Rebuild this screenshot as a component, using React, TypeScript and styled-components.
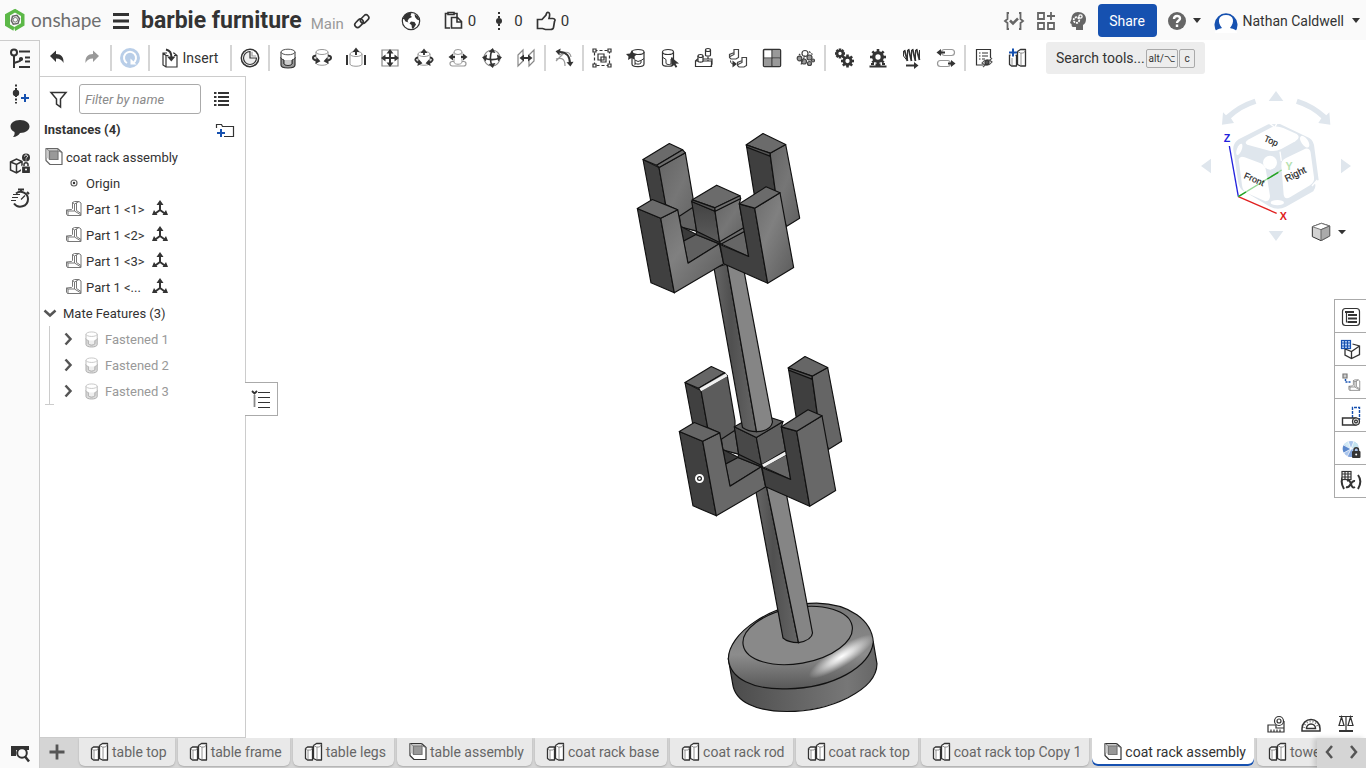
import React from "react";
import styled, { createGlobalStyle, css } from "styled-components";

const INK = "#333333";
const BLUE = "#1651b0";
const LINE = "#cccccc";

const GlobalStyle = createGlobalStyle`
  *, *::before, *::after { box-sizing: border-box; }
  body { margin: 0; background: #ffffff; }
  body, button, input { font-family: Roboto, "Liberation Sans", sans-serif; font-size: 14px; color: ${INK}; }
`;

/* ---------- layout ---------- */

const Page = styled.div`
  display: flex;
  flex-direction: column;
  height: 100vh;
  overflow: hidden;
`;

const Header = styled.header`
  display: flex;
  align-items: center;
  height: 40px;
  flex: none;
  padding: 1px 6px 0 4px;
  background: #fafafa;
`;

const Spacer = styled.div`
  flex: 1;
`;

const IconButton = styled.button<{ $w?: number; $h?: number }>`
  display: inline-flex;
  align-items: center;
  justify-content: center;
  flex: none;
  width: ${(p) => p.$w ?? 32}px;
  height: ${(p) => p.$h ?? 32}px;
  padding: 0;
  border: 0;
  background: transparent;
  cursor: pointer;
`;

const Brand = styled.a`
  display: flex;
  align-items: center;
  gap: 5px;
  width: 101px;
  color: #6e6e6e;
  text-decoration: none;
  font-family: Lato, sans-serif;
  font-size: 19px;
  line-height: 34px;
  height: 38px;
  padding-bottom: 2px;
`;

const DocTitle = styled.h1`
  margin: 0 0 0 4px;
  font-size: 23px;
  line-height: 28px;
  font-weight: 700;
  white-space: nowrap;
`;

const Branch = styled.span`
  margin: 6px 4px 0 9px;
  font-size: 15px;
  line-height: 20px;
  color: #999999;
`;

const Stat = styled.button`
  display: flex;
  align-items: center;
  gap: 3px;
  padding: 0;
  border: 0;
  background: transparent;
  font-size: 15px;
  line-height: 20px;
  white-space: nowrap;
`;

const Stats = styled.div`
  display: flex;
  align-items: center;
  gap: 11px;
  margin-left: 16px;
`;

const ShareButton = styled.button`
  width: 59px;
  height: 33px;
  margin: 0 8px 0 4px;
  padding: 0;
  border: 0;
  border-radius: 4px;
  background: ${BLUE};
  color: #ffffff;
`;

const UserButton = styled.button`
  display: flex;
  align-items: center;
  padding: 0;
  border: 0;
  background: transparent;
  white-space: nowrap;
`;

const UserName = styled.span`
  margin: 0 8px 0 4px;
`;

const Body = styled.div`
  display: flex;
  flex: 1;
  min-height: 0;
`;

const Rail = styled.nav`
  display: flex;
  flex-direction: column;
  align-items: center;
  flex: none;
  width: 40px;
  background: #fafafa;
  border-top: 1px solid ${LINE};
  border-right: 1px solid ${LINE};
`;

const Main = styled.div`
  display: flex;
  flex-direction: column;
  flex: 1;
  min-width: 0;
`;

const Toolbar = styled.div`
  display: flex;
  align-items: center;
  flex: none;
  height: 36px;
  padding-left: 1px;
`;

const Divider = styled.span`
  flex: none;
  width: 2px;
  height: 26px;
  margin: 0 1px;
  background: #d5d5d5;
`;

const InsertButton = styled.button`
  display: flex;
  align-items: center;
  justify-content: center;
  gap: 1px;
  flex: none;
  width: 78px;
  padding: 0 4px 0 0;
  border: 0;
  background: transparent;
`;

const SearchTools = styled.button`
  display: flex;
  align-items: center;
  flex: none;
  gap: 1px;
  height: 32px;
  width: 159px;
  margin-left: 11px;
  padding: 0 10px;
  border: 0;
  border-radius: 3px;
  background: #ededed;
  white-space: nowrap;
`;

const SearchLabel = styled.span`
  flex: 1;
  text-align: left;
`;

const Key = styled.kbd`
  height: 19px;
  min-width: 16px;
  padding: 0 2px;
  border: 1px solid #aaaaaa;
  border-radius: 2px;
  font-family: Roboto, "DejaVu Sans", sans-serif;
  font-size: 10px;
  line-height: 17px;
`;

const Work = styled.div`
  display: flex;
  flex: 1;
  min-height: 0;
`;

const Panel = styled.aside`
  flex: none;
  width: 206px;
  border: 1px solid ${LINE};
  border-left: 0;
  font-size: 13px;
`;

const FilterRow = styled.div`
  display: flex;
  align-items: center;
  gap: 8px;
  padding: 7px 10px 2px 7px;
`;

const FilterInput = styled.input`
  flex: 1;
  min-width: 0;
  height: 30px;
  padding: 0 5px;
  border: 1px solid #aaaaaa;
  border-radius: 3px;
  background: #ffffff;
  font-size: 13px;
  &::placeholder {
    color: #8a8a8a;
    font-style: italic;
  }
`;

const SectionRow = styled.div`
  display: flex;
  align-items: center;
  justify-content: space-between;
  height: 28px;
  padding: 0 8px 0 4px;
`;

const SectionTitle = styled.h2`
  margin: 0;
  font-size: 13px;
  line-height: 20px;
  font-weight: 700;
`;

const Tree = styled.ul`
  list-style: none;
  margin: 0;
  padding: 0;
`;

const TreeRow = styled.li<{ $indent: number; $gap?: number; $muted?: boolean }>`
  display: flex;
  align-items: center;
  gap: ${(p) => p.$gap ?? 0}px;
  height: 26px;
  padding-left: ${(p) => p.$indent}px;
  white-space: nowrap;
  color: ${(p) => (p.$muted ? "#999999" : INK)};
`;

const PartName = styled.span`
  width: 62px;
`;

const FeatureGroup = styled.ul`
  list-style: none;
  margin: 0 0 0 9px;
  padding: 0;
  border-left: 1px solid ${LINE};
  &::after {
    content: "";
    display: block;
    width: 9px;
    margin-left: -5px;
    border-bottom: 1px solid ${LINE};
  }
`;

const Canvas = styled.main`
  position: relative;
  display: flex;
  flex: 1;
  min-width: 0;
`;

const Model = styled.svg`
  flex: 1;
  min-width: 0;
`;

const PanelToggle = styled(IconButton)`
  position: absolute;
  left: -1px;
  top: 306px;
  background: #ffffff;
  border: 1px solid #aaaaaa;
  border-left: 0;
`;

const ViewCube = styled.div`
  position: absolute;
  top: 4px;
  right: 0;
`;

const SideTools = styled.div`
  position: absolute;
  right: 0;
  top: 223px;
  width: 32px;
  border: 1px solid #aaaaaa;
  border-right: 0;
  border-bottom: 0;
  background: #ffffff;
`;

const SideTool = styled(IconButton)`
  border-bottom: 1px solid #aaaaaa;
`;

const MeasureBar = styled.div`
  position: absolute;
  right: 3px;
  bottom: 0;
  display: flex;
`;

const TabBar = styled.div`
  display: flex;
  flex: none;
  height: 30px;
  background: #d5d5d5;
`;

const TabList = styled.div`
  display: flex;
  flex: 1;
  min-width: 0;
  gap: 3px;
  overflow: hidden;
  padding-left: 5px;
`;

const Tab = styled.button<{ $active?: boolean }>`
  display: flex;
  align-items: center;
  flex: none;
  height: 28px;
  padding: 0 8px 0 9px;
  border: 0;
  border-radius: 0 0 6px 6px;
  background: #e9e9e9;
  color: #666666;
  box-shadow: 0 1px 2px rgba(0, 0, 0, 0.2);
  white-space: nowrap;
  ${(p) =>
    p.$active &&
    css`
      background: #ffffff;
      color: ${INK};
      box-shadow: inset 0 -2px 0 ${BLUE};
    `}
`;

const TabScroll = styled.div`
  display: flex;
  flex: none;
  background: #d5d5d5;
  box-shadow: -3px 0 5px rgba(0, 0, 0, 0.15);
`;

/* ---------- icons ---------- */

type IconProps = { children: React.ReactNode; size?: number; stroke?: string };

const Icon = ({ children, size = 24, stroke = INK }: IconProps) => (
  <svg width={size} height={size} viewBox={`0 0 ${size} ${size}`} fill="none" stroke={stroke} strokeWidth="1.2" aria-hidden="true">
    {children}
  </svg>
);

const Caret = () => (
  <svg width="8" height="5" viewBox="0 0 8 5" aria-hidden="true">
    <path d="M0 0h8L4 5z" fill={INK} />
  </svg>
);

const LogoMark = () => (
  <svg width="22" height="24" viewBox="-1 0 22 24" aria-hidden="true">
    <path d="M9.500 1l3.500 1.800-8 4.700v9l4.400 2.500-1 3.800L0 17.800V6.300z" fill="#5cb848" />
    <path d="M10 .800l9.500 5.500v11.300l-9.300 5.400-1.200-3.700 7-4V8l-6.500-3.800z" fill="#5cb848" />
    <path d="M7.500 8.300l4.500-1 2.500 3.400-1.500 4.700-4.700.8-1.900-3.400z" fill="none" stroke="#666" strokeWidth="1.500" />
    <circle cx="10.300" cy="11.800" r="2.300" fill="none" stroke="#777" />
  </svg>
);

const MateGlyph = ({ muted }: { muted?: boolean }) => {
  const c = muted ? "#aaa" : INK;
  return (
    <g stroke={c}>
      <path d="M5 11v8c0 4 14 4 14 0v-8" fill={muted ? "#ddd" : "#999"} />
      <path d="M5 6v6c1 2 2 1 3 2v4c2 2 6 2 8 0v-4c1-1 2 0 3-2V6" fill="#fff" strokeWidth="1" />
      <path d="M8 14v4c2 2 6 2 8 0v-4" fill={muted ? "#eee" : "#ccc"} strokeWidth="1" />
      <ellipse cx="12" cy="6" rx="7" ry="2.800" fill="#fff" strokeWidth="1" stroke={muted ? "#bbb" : "#555"} />
    </g>
  );
};

const Cyl = ({ x = 6, w = 12, y = 6, h = 12 }) => (
  <g stroke="#999" strokeWidth="1">
    <path d={`M${x} ${y}v${h}c0 3 ${w} 3 ${w} 0v${-h}`} fill="#fff" />
    <ellipse cx={x + w / 2} cy={y} rx={w / 2} ry="2.500" fill="#fff" />
  </g>
);

const Arrow = ({ x, y, r }: { x: number; y: number; r: number }) => (
  <path d="M0 -3.500l4.500 3.500l-4.500 3.500z" transform={`translate(${x} ${y}) rotate(${r})`} fill={INK} stroke="none" />
);

const PartsGlyph = () => (
  <g stroke={INK} strokeWidth="1.300" strokeLinejoin="round">
    <path d="M3.500 8.500l2-1.500h5v13h-5l-2-1.500z" fill="#fff" />
    <path d="M3.500 8.500l2 1.500H9l1.500-2M6 10v10" strokeWidth=".8" stroke="#777" />
    <path d="M11.500 5.500l3-2h5V20h-5l-3-1.500z" fill="#fff" />
    <path d="M11.500 5.500l3 1.500h3l2-2.500M15 7v13" strokeWidth=".8" stroke="#777" />
  </g>
);

const AssemblyGlyph = ({ light }: { light?: boolean }) => (
  <g stroke={light ? "#666" : INK} strokeLinejoin="round" transform="translate(0 -.500)">
    <path d="M4 4h11.500l4.500 4v12H8l-4-4z" fill="#fff" />
    <path d="M4.500 4.500h11L16 6v9H7l-2.500-2z" fill="#ccc" stroke="none" />
    <path d="M7.500 6.500h8.500v8.500H7.500z" fill="#999" stroke="#777" />
    <path d="M4 4l3.500 2.500M16 6.500L15.500 4M16 6.500l4 1.500" stroke="#777" strokeWidth=".8" />
  </g>
);

const PartGlyph = () => (
  <g stroke="#777" strokeWidth="1" strokeLinejoin="round">
    <path d="M10.500 5.500L12.500 4.500h4.500l2 1.500v12.500H5.500L4.500 17v-4l5-.500 1-1z" fill="#fff" />
    <path d="M10.500 5.500l2 1.500v7H6l-1.500-1M12.500 7l4.500-2.500M12.500 14l6.500 4M14.500 6v7.500l4.500 3M6 14v4.500" />
  </g>
);

const AxesGlyph = () => (
  <g stroke={INK} strokeWidth="2">
    <path d="M12 6v7l-5.500 4M12 13l5.500 4" />
    <path d="M12 3l3.500 5h-7zM4 18l2-5 3.500 5zM20 18l-2-5-3.500 5z" fill={INK} stroke="none" />
  </g>
);

const gearTeeth = (cx: number, cy: number, r: number) =>
  [0, 45, 90, 135].map((a) => (
    <rect key={a} x={cx - 1.3} y={cy - r} width="2.600" height={2 * r} transform={`rotate(${a} ${cx} ${cy})`} fill={INK} stroke="none" />
  ));

const Gear = ({ cx, cy, r }: { cx: number; cy: number; r: number }) => (
  <g>
    {gearTeeth(cx, cy, r)}
    <circle cx={cx} cy={cy} r={r * 0.54} fill="#fff" stroke={INK} strokeWidth={r * 0.42} />
  </g>
);

type Tool = { label: string; art: React.ReactNode };

const historyTools: Tool[] = [
  { label: "Undo", art: <path d="M4 10l6-5.500v3.500c5 0 8 3 7.500 9-1.500-3-3.500-4.500-7.500-4.500v3.500z" fill={INK} stroke="none" /> },
  { label: "Redo", art: <path d="M19 10l-6-5.500v3.500c-5 0-8 3-7.500 9 1.500-3 3.500-4.500 7.500-4.500v3.500z" fill="#999" stroke="none" /> },
];

const mateTools: Tool[] = [
  { label: "Fastened mate", art: <MateGlyph /> },
  {
    label: "Revolute mate",
    art: (
      <>
        <Cyl x={6} w={12} y={6} h={11} />
        <path d="M6 9.500c-4 .500-4 4 0 5M18 9.500c4 .500 4 4 0 5" strokeWidth="2" />
        <Arrow x={6} y={14.5} r={10} />
        <Arrow x={18} y={14.5} r={170} />
      </>
    ),
  },
  {
    label: "Slider mate",
    art: (
      <>
        <Cyl x={6} w={12} y={8} h={10} />
        <path d="M3 9v10M21 9v10M12 4v5" strokeWidth="2" />
        <Arrow x={12} y={6} r={-90} />
      </>
    ),
  },
  {
    label: "Planar mate",
    art: (
      <>
        <path d="M4 4h16v16H4z" stroke="#888" />
        <path d="M12 5v14M5 12h14" strokeWidth="2" />
        <Arrow x={12} y={7.5} r={-90} />
        <Arrow x={12} y={16.5} r={90} />
        <Arrow x={7.5} y={12} r={180} />
        <Arrow x={16.5} y={12} r={0} />
      </>
    ),
  },
  {
    label: "Cylindrical mate",
    art: (
      <>
        <Cyl x={6} w={12} y={8} h={9} />
        <path d="M6 11.500c-5 1-2 5 1 5M18 11.500c5 1 2 5-1 5M12 4v5" strokeWidth="1.800" />
        <Arrow x={6} y={16.5} r={10} />
        <Arrow x={18} y={16.5} r={170} />
        <Arrow x={12} y={7} r={-90} />
      </>
    ),
  },
  {
    label: "Pin slot mate",
    art: (
      <>
        <rect x="4" y="15.500" width="16" height="4.500" rx="2.200" stroke="#999" />
        <Cyl x={8} w={8} y={6} h={10} />
        <path d="M5 11h4M15 11h4" strokeWidth="2" />
        <Arrow x={7} y={11} r={180} />
        <Arrow x={17} y={11} r={0} />
      </>
    ),
  },
  {
    label: "Ball mate",
    art: (
      <>
        <circle cx="12" cy="12" r="8" stroke="#888" />
        <path d="M12 4c-2 5-2 11 0 16M4 12c5 2 11 2 16 0" strokeWidth="1.600" />
        <Arrow x={12} y={6.5} r={-80} />
        <Arrow x={12} y={17.5} r={80} />
        <Arrow x={6.5} y={12} r={190} />
        <Arrow x={17.5} y={12} r={-10} />
      </>
    ),
  },
  {
    label: "Parallel mate",
    art: (
      <>
        <path d="M4 9l5-5v11l-5 5zM15 9l5-5v11l-5 5z" stroke="#888" />
        <path d="M9 12h6" strokeWidth="2" />
        <Arrow x={10} y={12} r={180} />
        <Arrow x={14} y={12} r={0} />
      </>
    ),
  },
];

const groupTools: Tool[] = [
  {
    label: "Group",
    art: (
      <>
        <rect x="4.500" y="4.500" width="15" height="15" strokeDasharray="3 2" />
        <path d="M3 3h3v3H3zM18 3h3v3h-3zM3 18h3v3H3zM18 18h3v3h-3z" fill="#fff" />
        <path d="M8 8h6v6H8zM11 11h5v5h-5z" fill="#fff" />
      </>
    ),
  },
  {
    label: "Mate connector",
    art: (
      <>
        <path d="M8 6v12c0 3.500 12 3.500 12 0V6" fill="#fff" />
        <ellipse cx="14" cy="6" rx="6" ry="2.500" fill="#fff" />
        <path d="M11 19v-5l3 1.500 3-1 3-2M11 17c2 1.500 4 1.500 6 0v-2.500" strokeWidth="1" />
        <path d="M8 4l1.500 3.500L13 8l-2.500 2.500L11 14l-3.500-2L4 14l.500-3.500L2 8l4-.500z" fill={INK} stroke="none" />
      </>
    ),
  },
  {
    label: "Replicate",
    art: (
      <>
        <path d="M4.500 6v12c0 3 11 3 11 0V6" fill="#fff" />
        <ellipse cx="10" cy="6" rx="5.500" ry="2.500" fill="#fff" />
        <path d="M5 11.500l3 2v4c1 1 3 1.500 5 .500v-5l2.500-1.500" strokeWidth="1" />
        <path d="M13 11l8 6.500-3.500.300 1.800 3-1.600 1-1.800-3-2.400 2z" fill={INK} stroke="none" />
      </>
    ),
  },
  {
    label: "Pattern",
    art: (
      <>
        <path d="M3.500 15h16v5.500h-16zM3.500 15l2-2h14.500v5l-1 2" />
        <path d="M6 10v5c0 1.500 5 1.500 5 0v-5M13.500 4v5c0 1.500 5 1.500 5 0V4" fill="#fff" />
        <ellipse cx="8.500" cy="10" rx="2.500" ry="1.500" fill="#fff" />
        <ellipse cx="16" cy="4" rx="2.500" ry="1.500" fill="#fff" />
        <path d="M16 11v4" strokeDasharray="2 1" />
      </>
    ),
  },
  {
    label: "Mirror parts",
    art: (
      <>
        <path d="M8 3.500h4.500v8L10 13H5l-1.500-1.500v-3L7 7h1zM8 3.500v5L4 10.500M16 11.500h4.500v8L18 21h-5l-1.500-1.500v-3L15 15h1zM16 11.500v5L12 18.500" fill="#fff" stroke="#444" />
        <path d="M4.500 14.500c0 3 1.500 3.500 4 3.500" strokeWidth="1" />
        <Arrow x={6.5} y={18} r={0} />
      </>
    ),
  },
  {
    label: "Display states",
    art: (
      <>
        <rect x="3.500" y="3.500" width="17" height="17" rx="1" fill="#fff" strokeWidth="1.500" />
        <path d="M12.500 4h7.500v8h-7.500zM4 12.500h8V20H4zM12.500 12.500H20V20h-7.500z" fill="#999" stroke="none" />
        <path d="M12 4v16M4 12h16" />
      </>
    ),
  },
  {
    label: "Named positions",
    art: (
      <g stroke="#444" fill="#999">
        <circle cx="11" cy="7.500" r="3" fill="#fff" />
        <circle cx="5.500" cy="12.500" r="2.300" />
        <circle cx="10" cy="15.500" r="2.500" />
        <circle cx="15.500" cy="11.500" r="2.500" />
        <circle cx="15.500" cy="17.500" r="2" />
        <circle cx="19" cy="14.500" r="1.500" />
        <path d="M5 8l2 2M15 5.500l3.500 3M7 18.500l4-9" strokeDasharray="2 1" />
      </g>
    ),
  },
];

const relationTools: Tool[] = [
  { label: "Gear relation", art: (<><Gear cx={8} cy={7.5} r={5} /><Gear cx={15.5} cy={15} r={6.5} /></>) },
  { label: "Rack and pinion", art: (<><Gear cx={12} cy={11} r={8} /><path d="M3.500 20.500h17M5 18h3M9.500 18.500h5M16 18h3" strokeWidth="2" /></>) },
  {
    label: "Screw relation",
    art: (
      <>
        <path d="M4.500 4l3 11M8.500 3l3 12M12.500 3l3 12M16.500 3l3 11" strokeWidth="1.800" />
        <path d="M3.500 5v5l4 5V4M11.500 15V4M15.500 15V4M19.500 14V4" strokeWidth="1" />
        <path d="M6 19.500h10" strokeWidth="2" />
        <Arrow x={14} y={19.5} r={0} />
      </>
    ),
  },
  {
    label: "Linear relation",
    art: (
      <>
        <rect x="7.500" y="3.500" width="13" height="6" rx="3" stroke="#999" />
        <rect x="3.500" y="14.500" width="13" height="6" rx="3" stroke="#999" />
        <path d="M5 6.500h6M14 17.500h5" strokeWidth="2" />
        <Arrow x={7} y={6.5} r={180} />
        <Arrow x={17} y={17.5} r={0} />
      </>
    ),
  },
];

const listTools: Tool[] = [
  {
    label: "Bill of materials",
    art: (
      <>
        <path d="M11 19H4.500V3.500h14V12" />
        <path d="M7 7h1.500M10 7h6M7 10h1.500M10 10h6M7 13h1.500M10 13h3" />
        <path d="M10 17c3-4 7-4 10-1-3 4-7 4-10 1zM20 12l-9 9" stroke="#555" />
        <circle cx="15" cy="16.500" r="2" fill="#555" />
      </>
    ),
  },
  {
    label: "Create part studio",
    art: (
      <>
        <PartsGlyph />
        <path d="M7 1v11M2 6.500h9" stroke="#fff" strokeWidth="4" />
        <path d="M7 2.500v8M3 6.500h8" stroke={BLUE} strokeWidth="2" />
      </>
    ),
  },
];

const railTools: Tool[] = [
  {
    label: "Assembly tree",
    art: (
      <>
        <circle cx="6" cy="5.500" r="3" strokeWidth="2" />
        <circle cx="13" cy="12" r="1.500" fill={INK} />
        <path d="M6 8v13M6 17c0-3 7-1 7-5M11 4.500h11M17 10.500h5M17 14.500h5M11 20h11" strokeWidth="2" />
      </>
    ),
  },
  {
    label: "Create version",
    art: (
      <>
        <path d="M8 2.500v19" strokeDasharray="2 1.500" strokeWidth="2" />
        <circle cx="8" cy="11" r="2.600" fill={INK} />
        <path d="M17 12v8M13 16h8" stroke={BLUE} strokeWidth="2" />
      </>
    ),
  },
  { label: "Comments", art: <path d="M12 3c6 0 9.500 3 9.500 6.500S18 16 12 16c-1 2-4 4-7 4 1-1 2-3 1.500-5C4 14 2.500 12 2.500 9.500 2.500 6 6 3 12 3z" fill={INK} stroke="none" /> },
  {
    label: "Part properties",
    art: (
      <>
        <path d="M2.500 10l6-3 5.500 2.500v8l-5.500 3.500-6-3zM2.500 10l6 2.500L14 9.500M8.500 12.500V21" strokeWidth="1.500" />
        <circle cx="18" cy="5.500" r="4" fill={INK} stroke="none" />
        <path d="M16.500 4.500c0-2 3-2 3 0 0 1-1.500 1-1.500 2M18 7.500v1" stroke="#fff" strokeWidth="1" />
        <rect x="13.500" y="14" width="9" height="7.500" rx="1" fill={INK} stroke="#fafafa" />
        <path d="M16 14v-1.500c0-2.500 4-2.500 4 0V14" strokeWidth="1.500" />
        <circle cx="18" cy="17.500" r="1" fill="#fff" stroke="none" />
      </>
    ),
  },
  {
    label: "History",
    art: (
      <>
        <path d="M8 6.500c5-4 12 0 12 5.500 0 8-10 10-14 4.500M10 2.500h6M13 2.500v3M19 5l2 2" strokeWidth="2" />
        <path d="M5 7.500h7M4 10.500h6M3 13.500h5M13 12.500l4-4" />
      </>
    ),
  },
];

const sideTools: Tool[] = [
  {
    label: "Outline",
    art: (
      <>
        <rect x="3.500" y="4.500" width="17" height="17" rx="3" />
        <path d="M6 8h9M9 11h9M9 14.500h9M9 18h9" strokeWidth="2" />
        <path d="M7.500 8v10h2" />
      </>
    ),
  },
  {
    label: "Configurations",
    art: (
      <>
        <path d="M13.500 7l7 2v8.500l-8 4-6.500-3.500V12l6.500 2.500 8-5.500M12.500 14.500v7" strokeWidth="1.300" />
        <rect x="2.500" y="3.500" width="9" height="8" fill="#c6dcfa" stroke={BLUE} />
        <path d="M2.500 6h9M2.500 9h9M5.500 3.500v8M8.500 3.500v8" stroke={BLUE} />
      </>
    ),
  },
  {
    label: "In context",
    art: (
      <>
        <path d="M4 4h4v4H4z" fill="#ccc" stroke="#777" />
        <path d="M6.500 9v3h6" stroke={BLUE} strokeDasharray="2 1" strokeWidth="1.500" />
        <g transform="translate(6.500 6.500) scale(.75)">
          <PartGlyph />
        </g>
      </>
    ),
  },
  {
    label: "Named positions",
    art: (
      <>
        <path d="M13.500 15V4.500h7V17" stroke={BLUE} strokeDasharray="3 1" strokeWidth="1.400" />
        <path d="M3.500 15H17v7H3.500z" strokeWidth="1.400" />
        <circle cx="17" cy="18.500" r="3.500" fill="#ddd" />
        <circle cx="17" cy="18.500" r="1.400" fill="#fff" />
      </>
    ),
  },
  {
    label: "Appearances",
    art: (
      <g stroke="none" transform="translate(0 1)">
        <circle cx="12" cy="12" r="8" fill="#a9c5ed" />
        <path d="M12 12L5 7.500A8 8 0 0 0 5 16z" fill="#5b88cc" />
        <path d="M12 12L9 4.500A8 8 0 0 0 5 7.500z" fill="#d3ebf5" />
        <path d="M12 12l-4 7a8 8 0 0 0 7 .500z" fill="#7c9fd8" />
        <path d="M12 12l3-7.500a8 8 0 0 1 4.500 5z" fill="#c4e4ef" />
        <path d="M12 12L9 4M12 12L4.500 8M12 12l-7.500 4M12 12l-4 8M12 12l3-8M12 12l8-2" stroke="#fff" strokeWidth=".8" />
        <rect x="13" y="14" width="8.500" height="7" rx="1" fill={INK} />
        <path d="M15 14.500V13c0-3 4.500-3 4.500 0v1.500" fill="none" stroke={INK} strokeWidth="1.500" />
        <circle cx="17.200" cy="17.500" r="1" fill="#fff" />
      </g>
    ),
  },
  {
    label: "Variables",
    art: (
      <>
        <path d="M5 6c-3 4-3 9 0 14M19 6c3 4 3 9 0 14M8 12c5-3 3 9 8 6M16 12c-5-1-4 8-9 6" strokeWidth="2" />
        <rect x="3" y="2.500" width="9" height="8" fill="#fff" />
        <path d="M3 5h9M3 8h9M6 2.500v8M9 2.500v8" />
      </>
    ),
  },
];

const ToolButtons = ({ tools }: { tools: Tool[] }) => (
  <>
    {tools.map((t) => (
      <IconButton key={t.label} $w={34} aria-label={t.label}>
        <Icon>{t.art}</Icon>
      </IconButton>
    ))}
  </>
);

/* ---------- model drawing ---------- */

const Rack = ({ lower }: { lower?: boolean }) => {
  const front = lower ? "#686868" : "url(#steel)";
  const top = lower ? "#666666" : "#6b6b6b";
  const bevel = "#6e6e6e";
  return (
    <g transform={lower ? "translate(662 343.500) scale(.33333)" : "translate(620 120.500) scale(.33333)"} stroke="#111" strokeWidth="3.500" strokeLinejoin="round">
      <path d="M69 117L117 141L137 252L92 240z" fill="#404040" />
      <path d="M117 141L196 97L219 232V262L230 332L183 318L172 268L137 252z" fill={lower ? "#5c5c5c" : "url(#steelSoft)"} />
      <path d="M178 287L219 260L230 332L183 320z" fill="#626262" />
      <path d="M69 117L148 69L188 88L110 134z" fill={top} />
      <path d="M110 134L188 88L196 97L117 141z" fill={bevel} />
      {lower && <path d="M115 139L194 94" stroke="#f0f0f0" strokeWidth="10" />}
      <path d="M379 73L450 100L466 212L403 224z" fill="#3f3f3f" />
      <path d="M450 98L497 72L539 293L499 318L466 212z" fill={lower ? "#656565" : "url(#steelSoft)"} />
      <path d="M379 73L429 39L497 72L450 98z" fill={top} />
      <path d="M379 73L450 98L450 107L380 80z" fill="#555555" />
      <path d="M183 318L230 342L190 362z" fill="#3a3a3a" />
      <path d="M190 362L228 342L298 370L204 428z" fill="#606060" />
      <path d="M230 332L299 364L300 371L228 342z" fill="#444444" />
      <path d="M302 370L374 332L386 408z" fill="#666666" />
      {lower ? (
        <>
          <path d="M217 250L283 282L299 366L230 332z" fill="#484848" />
          <path d="M283 282L363 234L358 250L371 322L299 366z" fill="#606060" />
          <path d="M217 250L288 210L363 234L283 282z" fill="#606060" />
        </>
      ) : (
        <>
          <path d="M215 243L285 272L299 366L230 332z" fill="url(#dark)" />
          <path d="M285 272L362 234L358 250L371 322L299 366z" fill="url(#steelSoft)" />
          <path d="M217 238L290 194L360 226L285 262z" fill={top} />
          <path d="M217 238L285 262V272L215 243z" fill="#555555" />
          <path d="M285 262L360 226L362 234L285 272z" fill="#707070" />
        </>
      )}
      <path d="M299 364L371 322L374 332L302 371z" fill={bevel} />
      {lower && <path d="M303 367L373 328" stroke="#f0f0f0" strokeWidth="10" />}
      <path d="M52 264L122 293L163 517L93 487z" fill="#404040" />
      <path d="M122 293L173 268L204 428L298 370L311 430L163 517z" fill={front} />
      <path d="M52 264L97 237L173 268L122 293z" fill={top} />
      <path d="M358 250L404 263L443 488L311 430L300 372L386 408z" fill="#404040" />
      <path d="M404 263L480 217L521 441L443 488z" fill={front} />
      <path d="M358 250L438 199L480 217L404 263z" fill={top} />
    </g>
  );
};

const CoatRack = () => (
  <Model viewBox="246 76 1120 662" role="img" aria-label="Coat rack assembly model">
    <defs>
      <linearGradient id="steel" x1="0" y1="0" x2="1" y2="1">
        <stop offset="0" stopColor="#6c6c6c" />
        <stop offset=".4" stopColor="#808080" />
        <stop offset="1" stopColor="#5a5a5a" />
      </linearGradient>
      <linearGradient id="steelSoft" x1="0" y1="0" x2="1" y2="1">
        <stop offset="0" stopColor="#646464" />
        <stop offset=".5" stopColor="#767676" />
        <stop offset="1" stopColor="#606060" />
      </linearGradient>
      <linearGradient id="dark" x1="0" y1="0" x2="0" y2="1">
        <stop offset="0" stopColor="#424242" />
        <stop offset="1" stopColor="#5c5c5c" />
      </linearGradient>
      <linearGradient id="rodShade">
        <stop offset="0" stopColor="#666666" />
        <stop offset=".4" stopColor="#505050" />
        <stop offset="1" stopColor="#666666" />
      </linearGradient>
      <linearGradient id="rim" x1="0" y1="0" x2="0" y2="1">
        <stop offset="0" stopColor="#777777" />
        <stop offset=".6" stopColor="#8c8c8c" />
        <stop offset="1" stopColor="#585858" />
      </linearGradient>
      <linearGradient id="side">
        <stop offset="0" stopColor="#4a4a4a" />
        <stop offset=".8" stopColor="#777777" />
        <stop offset="1" stopColor="#666666" />
      </linearGradient>
      <radialGradient id="shine">
        <stop offset="0" stopColor="#ffffff" />
        <stop offset=".35" stopColor="#ffffff" stopOpacity=".7" />
        <stop offset="1" stopColor="#ffffff" stopOpacity="0" />
      </radialGradient>
    </defs>
    <g transform="translate(710 520.500) scale(.33333)" stroke="#111" strokeWidth="3.500">
      <path d="M55 415L68 490C75 545 140 573 230 573C360 573 500 510 501 430L490 365z" fill="url(#side)" />
      <path d="M55 415C55 340 180 248 320 248C420 250 485 300 490 365C480 440 370 503 230 505C130 508 60 475 55 415z" fill="url(#rim)" />
      <ellipse cx="395" cy="408" rx="115" ry="29" transform="rotate(-32 395 408)" fill="url(#shine)" stroke="none" />
      <ellipse cx="263" cy="345" rx="166" ry="84" transform="rotate(-10 263 345)" fill="#898989" />
    </g>
    <g stroke="#111" strokeWidth="1.200">
      <path d="M756 492L783 638Q788 642.500 798.500 642.700L766 484z" fill="url(#rodShade)" />
      <path d="M766 484L798.500 642.700Q812 640 812.500 633L786 492z" fill="#858585" />
    </g>
    <Rack lower />
    <g stroke="#111" strokeWidth="1.200">
      <path d="M714 268L742.500 427.500Q748 431.500 756.500 431.700L727 264z" fill="url(#rodShade)" />
      <path d="M727 264L756.500 431.700Q771 431 772.500 422L744 271z" fill="#858585" />
    </g>
    <Rack />
    <circle cx="699.500" cy="478.500" r="3.500" fill="#222" stroke="#fff" strokeWidth="2" />
    <circle cx="699.500" cy="478.500" r="1.200" fill="#fff" />
  </Model>
);

const CubeDrawing = () => (
  <svg width="176" height="170" viewBox="0 0 528 510" role="img" aria-label="View orientation">
    <g fill="#dfe6ed">
      <path d="M258 33l22 30h-44zM258 483l22-30h-44zM33 258l30-22v44zM483 258l-30-22v44z" />
      <path d="M194 56l5 15q-46 14-76 44l9 14-36 5 3-37 9 9q36-34 86-50zM323 56l-5 15q46 14 76 44l-9 14 36 5-3-37-9 9q-36-34-86-50z" />
      <path d="M235 133L146 178Q128 190 130 210L145 310Q150 330 166 336L240 380Q264 392 288 380L370 334Q380 320 374 308L386 300L372 195Q368 176 350 170L270 132z" />
    </g>
    <g fill="#fff">
      <path d="M177 178L245 142Q262 136 280 144L320 162Q334 172 316 184L274 207Q256 216 238 212L172 194Q160 188 177 178z" />
      <path d="M146 238Q150 226 164 232L212 250Q226 256 228 272L240 348Q240 364 226 364L172 340Q158 334 156 316z" />
      <path d="M274 258Q272 242 288 234L346 206Q360 204 362 218L372 292Q374 306 360 316L300 352Q284 360 281 344z" />
      <circle cx="240" cy="248" r="21" />
      <ellipse cx="148" cy="208" rx="7" ry="18" transform="rotate(22 148 208)" />
      <ellipse cx="344" cy="185" rx="10" ry="20" transform="rotate(-35 344 185)" />
      <ellipse cx="262" cy="368" rx="20" ry="8" />
    </g>
    <path d="M236 128l16 12M262 128l-8 14M270 215l4 28M366 318l16-18" stroke="#fff" strokeWidth="4" />
    <path d="M145 350L260 400" stroke="#e02020" strokeWidth="4" />
    <path d="M145 350L118 198" stroke="#2222dd" strokeWidth="4" />
    <path d="M145 350L275 270" stroke="#94d894" strokeWidth="4" />
    <path d="M145 350L168 336M232 297L265 277" stroke="#22a022" strokeWidth="4" />
    <g fontFamily="Liberation Sans, sans-serif" fontSize="29" fill="#222" stroke="#222" strokeWidth=".5" textAnchor="middle">
      <text x="244" y="192" transform="rotate(24 244 182)" fontSize="27">Top</text>
      <text x="193" y="307" transform="rotate(23 193 297)" fontSize="27">Front</text>
      <text x="316" y="292" transform="rotate(-26 316 282)">Right</text>
      <text x="111" y="186" fontSize="32" fontWeight="700" fill="#2222dd" stroke="none">Z</text>
      <text x="280" y="420" fontSize="32" fontWeight="700" fill="#e02020" stroke="none">X</text>
      <text x="297" y="269" fontSize="32" fontWeight="700" fill="#b5e2b0" stroke="none">Y</text>
    </g>
    <g stroke="#333" strokeWidth="3" strokeLinejoin="round">
      <path d="M367 440L394 430L419 438V468L393 482L367 470z" fill="#d2d2d2" />
      <path d="M367 440L394 430L419 438L393 449z" fill="#fff" stroke="#777" />
      <path d="M393 449L419 438V468L393 482z" fill="#aaa" stroke="#666" />
    </g>
    <path d="M444 450h24l-12 13z" fill={INK} />
  </svg>
);

/* ---------- page ---------- */

const tabs = [
  "table top",
  "table frame",
  "table legs",
  "table assembly",
  "coat rack base",
  "coat rack rod",
  "coat rack top",
  "coat rack top Copy 1",
  "coat rack assembly",
  "towel",
];

const parts = ["Part 1 <1>", "Part 1 <2>", "Part 1 <3>", "Part 1 <..."];

const Chevron = ({ d }: { d: string }) => (
  <Icon size={18} stroke="#555">
    <path d={d} strokeWidth="2.500" />
  </Icon>
);

export default function App() {
  return (
    <Page>
      <GlobalStyle />
      <Header>
        <Brand href="#">
          <LogoMark />
          <span>onshape</span>
        </Brand>
        <IconButton aria-label="Menu">
          <Icon><path d="M4 5.500h16M4 12h16M4 18.500h16" strokeWidth="3" /></Icon>
        </IconButton>
        <DocTitle>barbie furniture</DocTitle>
        <Branch>Main</Branch>
        <IconButton $w={28} aria-label="Link">
          <Icon>
            <g transform="rotate(-45 12 12)" strokeWidth="1.600">
              <rect x="3.500" y="8.700" width="9.500" height="5.600" rx="2.800" />
              <rect x="10.500" y="9.700" width="9.500" height="5.600" rx="2.800" />
            </g>
          </Icon>
        </IconButton>
        <Stats>
          <IconButton $w={38} aria-label="Public document">
            <Icon>
              <circle cx="12" cy="12" r="8.700" fill="#fff" />
              <path d="M3.500 10l3-5 4-1.500 2 1-1 2 1.500 1.500-3 1.500-1.500 2.500 1 1.500-3-1-1.500-2.500zM12 12.500l3.500.500 1.500 2.500-2.500 4-1.500 0-.500-3.500-2-1.500zM15.500 5l3.500 2.500 1.500 4-2.500-1-2-2.500z" fill={INK} stroke="none" />
            </Icon>
          </IconButton>
          <Stat>
            <Icon>
              <path d="M9 19H4.500V4.500H7M13 4.500h3V8M7 3.500h6v2H7z" strokeWidth="1.600" />
              <path d="M10.500 8.500h6l4 4v6.500h-10zM16 8.500v4.500h4.500" strokeWidth="1.600" />
            </Icon>
            0
          </Stat>
          <Stat>
            <Icon>
              <path d="M12 3v18" strokeWidth="2" strokeDasharray="2 2" />
              <circle cx="12" cy="12" r="3" fill={INK} stroke="none" />
            </Icon>
            0
          </Stat>
          <Stat>
            <Icon>
              <path d="M3.500 10.500H8l4-4.500c.500-2 1-3 2.500-2.500s1.500 2.500.500 6h4c2 0 2.500 2 1.500 3l-1 6c-.500 2-2 2-3 2h-5l-3-1H3.500z" strokeWidth="1.700" />
            </Icon>
            0
          </Stat>
        </Stats>
        <Spacer />
        <IconButton aria-label="Custom features">
          <Icon stroke="#666">
            <path d="M7 4H5.500v6L3 12l2.500 2v6H7M17 4h1.500v6l2.500 2-2.500 2v6H17" strokeWidth="1.800" />
            <path d="M8 11.500l3 3 5-5" strokeWidth="2.500" />
          </Icon>
        </IconButton>
        <IconButton aria-label="Applications">
          <Icon stroke="#666">
            <path d="M4 4h6v6H4zM4 14h6v6H4zM14 14h6v6h-6zM17 3v8M13 7h8" strokeWidth="1.800" />
          </Icon>
        </IconButton>
        <IconButton aria-label="Learning">
          <Icon stroke="none">
            <path d="M12 3c5 0 8 3 8 7 0 3-1 5-3 6v5h-7v-3H7c-1 0-1.500-1-1.500-3L4 14l1.500-4C5.500 6 8 3 12 3z" fill="#666" />
            <circle cx="10.500" cy="11" r="2.800" fill="none" stroke="#fff" strokeWidth="1.800" strokeDasharray="2 .8" />
            <circle cx="14.500" cy="7.500" r="1.600" fill="none" stroke="#fff" strokeWidth="1.300" />
          </Icon>
        </IconButton>
        <ShareButton>Share</ShareButton>
        <IconButton $w={24} aria-label="Help">
          <Icon>
            <circle cx="12" cy="12" r="9" fill="#666" stroke="none" />
            <path d="M9 10c0-4 6-4 6-.500 0 2-3 2-3 4.500M12 15.500v2.500" stroke="#fff" strokeWidth="2.400" />
          </Icon>
        </IconButton>
        <IconButton $w={16} aria-label="Help menu"><Caret /></IconButton>
        <UserButton>
          <svg width="34" height="24" viewBox="-2 1 34 24" aria-hidden="true">
            <path d="M10 24A11.500 11.500 0 1 1 28 24L24 21H14z" fill={BLUE} />
            <path d="M8 25c0-3 3-4 7-5-5-6-4-13 4-13s9 7 4 13c4 1 7 2 7 5z" fill="#fff" />
          </svg>
          <UserName>Nathan Caldwell</UserName>
          <Caret />
        </UserButton>
      </Header>

      <Body>
        <Rail>
          {railTools.map((t) => (
            <IconButton key={t.label} $h={35} $w={39} aria-label={t.label}>
              <Icon>{t.art}</Icon>
            </IconButton>
          ))}
          <Spacer />
          <IconButton $w={39} $h={30} aria-label="Search tabs">
            <Icon>
              <path d="M3 15V5h18v4H8v6z" fill={INK} stroke="none" />
              <circle cx="14" cy="12" r="4.800" fill="#fafafa" strokeWidth="2" />
              <path d="M17 15.500l4 5" strokeWidth="2.500" />
            </Icon>
          </IconButton>
        </Rail>

        <Main>
          <Toolbar role="toolbar" aria-label="Assembly tools">
            <ToolButtons tools={historyTools} />
            <Divider />
            <IconButton $w={34} aria-label="Update">
              <Icon>
                <circle cx="12" cy="12" r="10" fill="#b9cee8" stroke="none" />
                <path d="M9 17a6 6 0 1 1 6 0" stroke="#fff" strokeWidth="2" />
                <path d="M12.500 12.500v6h6z" fill="#fff" stroke="none" />
              </Icon>
            </IconButton>
            <Divider />
            <InsertButton>
              <Icon>
                <path d="M9 7H5v12l3 2h11V9.500L16 7h-1M5 7l3 2.500V21M8 9.500h2.500M16 9.500h3" />
                <path d="M8 3.500c4 1 5.500 3 5.500 9" strokeWidth="2" />
                <path d="M9 10.500h8.500l-4.200 5z" fill={INK} stroke="none" />
              </Icon>
              <span>Insert</span>
            </InsertButton>
            <Divider />
            <IconButton $w={34} aria-label="Snap mode">
              <Icon>
                <circle cx="12" cy="12" r="8.700" strokeWidth="1.500" />
                <path d="M12 5.500V12h6.500a6.500 6.500 0 1 1-6.500-6.500z" fill="#eee" />
                <path d="M14 5.800V10h4.200" stroke="#999" />
              </Icon>
            </IconButton>
            <Divider />
            <ToolButtons tools={mateTools} />
            <Divider />
            <IconButton $w={34} aria-label="Tangent mate">
              <Icon>
                <path d="M4 13c7-2 9 1 9 7M8 9c2-3 10-5 11 2M4 15l8-8" stroke="#999" />
                <path d="M8 6c6 0 10 4 10 12" strokeWidth="2" />
                <Arrow x={8} y={6} r={190} />
                <Arrow x={18} y={16} r={85} />
              </Icon>
            </IconButton>
            <Divider />
            <ToolButtons tools={groupTools} />
            <Divider />
            <ToolButtons tools={relationTools} />
            <Divider />
            <ToolButtons tools={listTools} />
            <SearchTools>
              <SearchLabel>Search tools...</SearchLabel>
              <Key>alt/⌥</Key>
              <Key>c</Key>
            </SearchTools>
          </Toolbar>

          <Work>
            <Panel>
              <FilterRow>
                <IconButton $w={24} $h={30} aria-label="Filter">
                  <Icon><path d="M4 5.500h15L13.500 12v8l-4-3v-5z" strokeWidth="1.500" /></Icon>
                </IconButton>
                <FilterInput aria-label="Filter by name" placeholder="Filter by name" />
                <IconButton $w={26} $h={30} aria-label="List view">
                  <Icon>
                    <path d="M4 6h2.500M8 6h11M4 10h2.500M8 10h11M4 14h2.500M8 14h11M4 18h2.500M8 18h11" strokeWidth="2" />
                  </Icon>
                </IconButton>
              </FilterRow>
              <SectionRow>
                <SectionTitle>Instances (4)</SectionTitle>
                <IconButton $w={24} $h={28} aria-label="Add folder">
                  <Icon>
                    <path d="M3.500 10V6.500h5l1 2h11v10H11" />
                    <path d="M8 11v8M4 15h8" stroke={BLUE} strokeWidth="2" />
                  </Icon>
                </IconButton>
              </SectionRow>
              <Tree>
                <TreeRow $indent={2}>
                  <Icon size={24}><AssemblyGlyph light /></Icon>
                  <span>coat rack assembly</span>
                </TreeRow>
                <TreeRow $indent={22}>
                  <Icon size={24} stroke="#666">
                    <circle cx="12" cy="12" r="3" />
                    <circle cx="12" cy="12" r="1.200" fill={INK} stroke="none" />
                  </Icon>
                  <span>Origin</span>
                </TreeRow>
                {parts.map((name) => (
                  <TreeRow key={name} $indent={22}>
                    <Icon><PartGlyph /></Icon>
                    <PartName>{name}</PartName>
                    <Icon><AxesGlyph /></Icon>
                  </TreeRow>
                ))}
                <TreeRow $indent={1} $gap={4}>
                  <Chevron d="M3.500 6.500l5.500 5 5.500-5" />
                  <span>Mate Features (3)</span>
                </TreeRow>
                <li>
                  <FeatureGroup>
                    {[1, 2, 3].map((n) => (
                      <TreeRow key={n} $indent={9} $gap={2} $muted>
                        <Chevron d="M6.500 3.500l5 5.500-5 5.500" />
                        <Icon size={24}>
                          <g transform="translate(3 2.400) scale(.8)"><MateGlyph muted /></g>
                        </Icon>
                        <span>Fastened {n}</span>
                      </TreeRow>
                    ))}
                  </FeatureGroup>
                </li>
              </Tree>
            </Panel>

            <Canvas>
              <CoatRack />
              <PanelToggle $w={33} $h={34} aria-label="Toggle tree panel">
                <Icon>
                  <path d="M3 4l2.500 2.500L8 4" strokeWidth="1.800" />
                  <path d="M5.500 8v12" stroke="#888" strokeWidth="1.800" />
                  <path d="M9 5.500h12M9 10.500h12M9 15.500h12M9 20.500h12" />
                </Icon>
              </PanelToggle>
              <ViewCube><CubeDrawing /></ViewCube>
              <SideTools>
                {sideTools.map((t) => (
                  <SideTool key={t.label} $h={33} aria-label={t.label}>
                    <Icon>{t.art}</Icon>
                  </SideTool>
                ))}
              </SideTools>
              <MeasureBar>
                <IconButton $w={35} $h={28} aria-label="Measure">
                  <Icon>
                    <path d="M4 13h8v3h8v4H4zM20 16V9" />
                    <circle cx="15" cy="9" r="4.500" fill="#fff" />
                    <circle cx="15" cy="9" r="2" />
                    <path d="M7 20v-2.500M10 20v-2.500M13 20v-2.500M16 20v-2.500" />
                  </Icon>
                </IconButton>
                <IconButton $w={35} $h={28} aria-label="Angle">
                  <Icon>
                    <path d="M3 19v-2.500a9 9 0 0 1 18 0V19zM7.500 16.500a4.500 4.500 0 0 1 9 0z" strokeWidth="1.500" />
                    <path d="M5.300 16a6.700 6.700 0 0 1 13.400 0" strokeDasharray="1 2" stroke="#777" strokeWidth="2" />
                  </Icon>
                </IconButton>
                <IconButton $w={35} $h={28} aria-label="Mass properties">
                  <Icon>
                    <path d="M5 4.500h14M12 4v14M7.500 5l-2.500 8.500h5zM16.500 5L14 13.500h5z" />
                    <path d="M5 19h14" strokeWidth="2" />
                  </Icon>
                </IconButton>
              </MeasureBar>
            </Canvas>
          </Work>

          <TabBar>
            <IconButton $w={34} $h={28} aria-label="Add tab">
              <Icon stroke="#555"><path d="M4.500 12h15M12 4.500v15" strokeWidth="2.800" /></Icon>
            </IconButton>
            <TabList role="tablist">
              {tabs.map((name) => {
                const active = name === "coat rack assembly";
                return (
                  <Tab key={name} role="tab" aria-selected={active} $active={active}>
                    <Icon size={24}>{name.endsWith("assembly") ? <AssemblyGlyph /> : <PartsGlyph />}</Icon>
                    <span>{name}</span>
                  </Tab>
                );
              })}
            </TabList>
            <TabScroll>
              <IconButton $w={24} $h={28} aria-label="Previous tabs"><Chevron d="M12 3l-5 6 5 6" /></IconButton>
              <IconButton $w={25} $h={28} aria-label="Next tabs"><Chevron d="M6 3l5 6-5 6" /></IconButton>
            </TabScroll>
          </TabBar>
        </Main>
      </Body>
    </Page>
  );
}
